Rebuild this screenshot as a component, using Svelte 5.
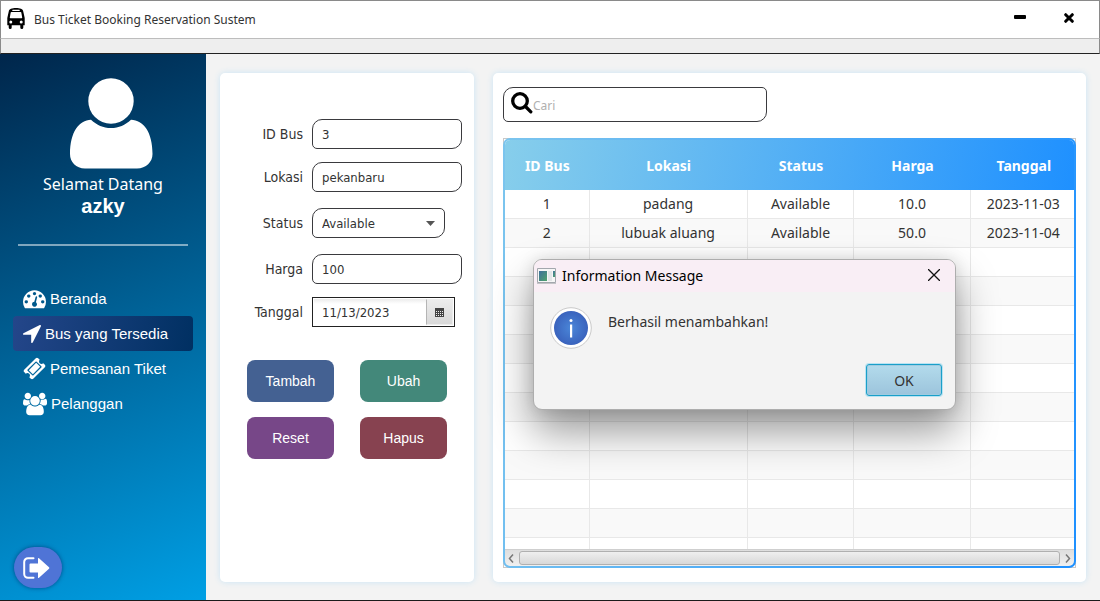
<script>
  let idBus = $state('3');
  let lokasi = $state('pekanbaru');
  let status = $state('Available');
  let harga = $state('100');
  let tanggal = $state('11/13/2023');
  let cari = $state('');
  let dialogOpen = $state(true);

  const columns = ['ID Bus', 'Lokasi', 'Status', 'Harga', 'Tanggal'];
  const buses = [
    ['1', 'padang', 'Available', '10.0', '2023-11-03'],
    ['2', 'lubuak aluang', 'Available', '50.0', '2023-11-04']
  ];
  const emptyRows = Array.from({ length: 11 });
</script>

<div class="window">
  <header class="titlebar">
    <svg class="bus" viewBox="0 0 18 21" aria-hidden="true">
      <path fill-rule="evenodd" d="M1.8 3.2C2 1.2 5 0 9 0s7 1.2 7.2 3.2L17.7 10v7.2h-1.4v2.2a1.4 1.4 0 0 1-3 0v-2.2H4.700v2.2a1.400 1.400 0 0 1-3 0v-2.200H.3V10zM5.800 1.700a.5.5 0 0 0 0 1.300h6.400a.5.5 0 0 0 0-1.300zM3.700 4.500 2.800 9.600q0 .6.600.6h11.200q.6 0 .6-.6l-.9-5.100q-.1-.5-.6-.5H4.300q-.5 0-.6.500zM3.800 12.500a1.500 1.500 0 1 0 0 3 1.500 1.500 0 0 0 0-3zm10.400 0a1.500 1.500 0 1 0 0 3 1.500 1.500 0 0 0 0-3z" />
    </svg>
    <h1>Bus Ticket Booking Reservation Sustem</h1>
    <div class="controls">
      <button type="button" aria-label="Minimize">
        <svg viewBox="0 0 12 12"><rect x="0" y="2" width="12" height="4" rx="1" /></svg>
      </button>
      <button type="button" aria-label="Close">
        <svg viewBox="0 0 12 12"><path d="M2.700 1.700l6.600 6.600M9.300 1.700L2.700 8.300" stroke="#000" stroke-width="3" stroke-linecap="round" /></svg>
      </button>
    </div>
  </header>
  <div class="strip"></div>

  <div class="body">
    <aside>
      <svg class="avatar" viewBox="0 0 84 91" aria-hidden="true">
        <circle cx="42" cy="23" r="22.700" />
        <path d="M22 41.700C10 42 1 54 1 76c0 8 6 14.500 15 14.500h52c9 0 15.500-6.500 15.500-14.500 0-22-9-34-21.500-34.300C56 47 50 50 42 50s-14-3-20-8.300z" />
      </svg>
      <p class="welcome">Selamat Datang</p>
      <p class="user">azky</p>
      <hr />
      <nav>
        <a href="#beranda">
          <svg width="23" height="23" viewBox="0 0 1792 1792"><path d="M384 1152q0-53-37.5-90.5t-90.5-37.5-90.5 37.5-37.5 90.5 37.5 90.5 90.5 37.5 90.5-37.5 37.5-90.5zm192-448q0-53-37.5-90.5t-90.5-37.5-90.5 37.5-37.5 90.5 37.5 90.5 90.5 37.5 90.5-37.5 37.5-90.5zm428 481l101-382q6-26-7.5-48.5t-38.5-29.5-48 6.5-30 39.5l-101 382q-60 5-107 43.5t-63 98.5q-20 77 20 146t117 89 146-20 89-117q16-60-6-117t-72-91zm660-33q0-53-37.5-90.5t-90.5-37.5-90.5 37.5-37.5 90.5 37.5 90.5 90.5 37.5 90.5-37.5 37.5-90.5zm-640-640q0-53-37.5-90.5t-90.5-37.5-90.5 37.5-37.5 90.5 37.5 90.5 90.5 37.5 90.5-37.5 37.5-90.5zm448 192q0-53-37.5-90.5t-90.5-37.5-90.5 37.5-37.5 90.5 37.5 90.5 90.5 37.5 90.5-37.5 37.5-90.5zm320 448q0 261-141 483-19 29-54 29h-1402q-35 0-54-29-141-221-141-483 0-182 71-348t191-286 286-191 348-71 348 71 286 191 191 286 71 348z" /></svg>
          Beranda
        </a>
        <a href="#bus" class="active" aria-current="page">
          <svg width="18" height="18" viewBox="192 256 1408 1408"><path d="M1593 349l-640 1280q-17 35-57 35-5 0-15-2-22-5-35.500-22.500t-13.500-39.500v-576h-576q-22 0-39.500-13.500t-22.500-35.500 4-42 29-30l1280-640q13-7 29-7 27 0 45 19 15 14 18.500 34.500t-6.500 39.500z" /></svg>
          Bus yang Tersedia
        </a>
        <a href="#tiket">
          <svg width="23" height="23" viewBox="0 0 1792 1792"><path d="M1024 452l316 316-572 572-316-316zm-211 979l618-618q19-19 19-45t-19-45l-362-362q-18-18-45-18t-45 18l-618 618q-19 19-19 45t19 45l362 362q18 18 45 18t45-18zm889-637l-907 908q-37 37-90.500 37t-90.500-37l-126-126q56-56 56-136t-56-136-136-56-136 56l-125-126q-37-37-37-90.500t37-90.500l907-906q37-37 90.500-37t90.500 37l125 125q-56 56-56 136t56 136 136 56 136-56l126 125q37 37 37 90.500t-37 90.500z" /></svg>
          Pemesanan Tiket
        </a>
        <a href="#pelanggan">
          <svg width="24" height="24" viewBox="64 0 1920 1792"><path d="M657 896q-162 5-265 128h-134q-82 0-138-40.500t-56-118.500q0-353 124-353 6 0 43.500 21t97.500 42.500 119 21.500q67 0 133-23-5 37-5 66 0 159 91 294zm1071 637q0 120-73 189.500t-194 69.500h-874q-121 0-194-69.500t-73-189.500q0-53 3.500-103.500t14-109 26.500-108.500 43-97.500 62-81 85.500-53.500 111.500-20q10 0 43 21.500t73 48 107 48 135 21.500 135-21.500 107-48 73-48 43-21.500q61 0 111.500 20t85.500 53.500 62 81 43 97.500 26.500 108.500 14 109 3.500 103.500zm-1024-1277q0 106-75 181t-181 75-181-75-75-181 75-181 181-75 181 75 75 181zm704 384q0 159-112.500 271.500t-271.500 112.500-271.500-112.500-112.500-271.500 112.500-271.500 271.500-112.500 271.500 112.500 112.500 271.500zm576 225q0 78-56 118.500t-138 40.500h-134q-103-123-265-128 91-135 91-294 0-29-5-66 66 23 133 23 59 0 119-21.500t97.500-42.500 43.500-21q124 0 124 353zm-128-609q0 106-75 181t-181 75-181-75-75-181 75-181 181-75 181 75 75 181z" /></svg>
          Pelanggan
        </a>
      </nav>
      <button type="button" class="logout" aria-label="Logout">
        <svg width="28" height="22" viewBox="0 0 28 22">
          <path d="M10.500 1.200H5A3.800 3.800 0 0 0 1.200 5v12A3.800 3.800 0 0 0 5 20.800h5.500" fill="none" stroke="#fff" stroke-width="2" stroke-linecap="round" />
          <path d="M6.500 7.500q0-1 1-1h7.500V1.600q0-1.200 1-.4l10 9q.8.800 0 1.600l-10 9q-1 .8-1-.4v-4.900H7.500q-1 0-1-1z" />
        </svg>
      </button>
    </aside>

    <main>
      <section class="panel form-panel">
        <form onsubmit={(e) => e.preventDefault()}>
          <div class="field"><label for="id">ID Bus</label><input id="id" class="box" bind:value={idBus} /></div>
          <div class="field"><label for="lokasi">Lokasi</label><input id="lokasi" class="box" bind:value={lokasi} /></div>
          <div class="field choice">
            <label for="status">Status</label>
            <div class="select">
              <select id="status" class="box" bind:value={status}>
                <option>Available</option>
                <option>Not Available</option>
              </select>
              <svg width="9" height="5" viewBox="0 0 9 5" aria-hidden="true"><path d="M0 0h9L4.500 5z" fill="#555" /></svg>
            </div>
          </div>
          <div class="field"><label for="harga">Harga</label><input id="harga" class="box" bind:value={harga} /></div>
          <div class="field">
            <label for="tanggal">Tanggal</label>
            <div class="date">
              <input id="tanggal" bind:value={tanggal} />
              <button type="button" aria-label="Pilih tanggal">
                <svg width="9" height="9" viewBox="0 0 9 9" shape-rendering="crispEdges">
                  <path d="M0 0h9v9H0z" fill="#444" />
                  <path d="M1 3h1v1H1zm2 0h1v1H3zm2 0h1v1H5zm2 0h1v1H7zM1 5h1v1H1zm2 0h1v1H3zm2 0h1v1H5zm2 0h1v1H7zM1 7h1v1H1zm2 0h1v1H3zm2 0h1v1H5zm2 0h1v1H7z" fill="#eee" />
                </svg>
              </button>
            </div>
          </div>
          <div class="actions">
            <button type="button" class="add">Tambah</button>
            <button type="button" class="edit">Ubah</button>
            <button type="button" class="reset">Reset</button>
            <button type="button" class="delete">Hapus</button>
          </div>
        </form>
      </section>

      <section class="panel list-panel">
        <label class="search box">
          <svg width="22" height="22" viewBox="0 0 22 22" aria-hidden="true">
            <circle cx="9" cy="9" r="7.300" fill="none" stroke="#000" stroke-width="3.300" />
            <path d="M14.500 14.500l5.300 5.300" stroke="#000" stroke-width="3.300" stroke-linecap="round" />
          </svg>
          <input aria-label="Cari" placeholder="Cari" bind:value={cari} />
        </label>

        <div class="frame">
          <div class="grid">
            <div class="rows">
              <table>
                <colgroup><col class="c1" /><col class="c2" /><col class="c3" /><col class="c4" /><col /></colgroup>
                <thead>
                  <tr>{#each columns as c}<th>{c}</th>{/each}</tr>
                </thead>
                <tbody>
                  {#each buses as bus}
                    <tr>{#each bus as cell}<td>{cell}</td>{/each}</tr>
                  {/each}
                  {#each emptyRows as _}
                    <tr>{#each columns as _c}<td></td>{/each}</tr>
                  {/each}
                </tbody>
              </table>
            </div>
            <div class="scroll">
              <svg width="6" height="9" viewBox="0 0 6 9"><path d="M5 .5L1.500 4.500 5 8.500" /></svg>
              <div class="thumb"></div>
              <svg width="6" height="9" viewBox="0 0 6 9"><path d="M1 .5l3.500 4L1 8.500" /></svg>
            </div>
          </div>
        </div>
      </section>
    </main>
  </div>

  {#if dialogOpen}
    <div class="dialog" role="dialog" aria-labelledby="dialog-title">
      <div class="dialog-bar">
        <svg width="19" height="16" viewBox="0 0 19 16" aria-hidden="true">
          <defs>
            <linearGradient id="pane-fill" x1="0" y1="0" x2="1" y2="1"><stop offset="0" stop-color="#3f6f9c" /><stop offset="1" stop-color="#4fa36c" /></linearGradient>
          </defs>
          <path d="M.5.5h18v14H.5z" fill="#f6f6f6" stroke="#a3a7ad" />
          <path d="M0 15h19v1H0z" fill="#c4c4c8" />
          <path d="M2 3h8v10H2z" fill="url(#pane-fill)" />
          <path d="M11 3h4v10h-4z" fill="#e3e6e8" />
          <path d="M16 3h2v6h-2z" fill="url(#pane-fill)" />
        </svg>
        <h2 id="dialog-title">Information Message</h2>
        <button type="button" class="close" aria-label="Tutup" onclick={() => (dialogOpen = false)}>
          <svg width="12" height="12" viewBox="0 0 12 12"><path d="M0 0l12 12M12 0L0 12" stroke="#111" stroke-width="1.300" /></svg>
        </button>
      </div>
      <div class="dialog-body">
        <svg width="42" height="42" viewBox="0 0 42 42" aria-hidden="true">
          <defs>
            <radialGradient id="info-fill"><stop offset="0" stop-color="#4a86d8" /><stop offset="1" stop-color="#3a63bd" /></radialGradient>
          </defs>
          <circle cx="21" cy="21" r="20.300" fill="#fff" stroke="#c9c9c9" />
          <circle cx="21" cy="21" r="17" fill="url(#info-fill)" />
          <circle cx="21" cy="13.500" r="1.500" fill="#fff" />
          <path d="M20 17.500h2.200v13H20z" fill="#fff" />
        </svg>
        <p>Berhasil menambahkan!</p>
      </div>
      <div class="dialog-foot">
        <button type="button" onclick={() => (dialogOpen = false)}>OK</button>
      </div>
    </div>
  {/if}
</div>

<style>
  :global(body) {
    margin: 0;
    background: #f3f3f3;
  }
  * {
    box-sizing: border-box;
  }
  .window {
    position: relative;
    display: flex;
    flex-direction: column;
    min-height: 100vh;
    border-bottom: 1px solid #1b1b1b;
    font-family: 'Noto Sans', 'Open Sans', sans-serif;
    color: #333;
  }
  button,
  input,
  select {
    font: inherit;
    color: inherit;
    margin: 0;
  }
  h1,
  h2,
  p {
    margin: 0;
    font-weight: 400;
  }
  svg {
    display: block;
    flex: none;
  }
  .titlebar {
    display: flex;
    align-items: center;
    height: 39px;
    padding: 0 24px 2px 6px;
    background: #fff;
    border: 1px solid #8a8a8a;
    border-bottom-color: #bdbdbd;
  }
  .bus {
    width: 18px;
    height: 21px;
  }
  h1 {
    margin-left: 9px;
    padding-top: 2px;
    font-size: 12px;
    line-height: 18px;
  }
  .controls {
    display: flex;
    gap: 37px;
    margin-left: auto;
  }
  .controls button {
    padding: 0;
    border: 0;
    background: none;
  }
  .controls svg {
    width: 12px;
    height: 12px;
  }
  .strip {
    height: 15px;
    background: #eee;
    border: 1px solid #8a8a8a;
    border-top: 0;
    border-bottom-color: #222;
  }
  .body {
    flex: 1;
    display: flex;
  }
  aside {
    flex: none;
    display: flex;
    flex-direction: column;
    width: 206px;
    padding: 24px 13px 12px;
    background: linear-gradient(159deg, #00264b, #009fe4);
    color: #fff;
    fill: #fff;
    font-family: 'Liberation Sans', Arial, sans-serif;
  }
  .avatar {
    width: 84px;
    height: 91px;
    margin-left: 56px;
  }
  .welcome {
    margin-top: 4px;
    font-family: 'Noto Sans', sans-serif;
    font-size: 16px;
    line-height: 22px;
    text-align: center;
  }
  .user {
    font-size: 20px;
    font-weight: 700;
    line-height: 22px;
    text-align: center;
  }
  hr {
    width: 170px;
    height: 2px;
    margin: 27px auto 35px 5px;
    border: 0;
    background: rgba(255, 255, 255, 0.5);
  }
  nav a {
    display: flex;
    align-items: center;
    gap: 4px;
    height: 35px;
    padding-left: 10px;
    border-radius: 4px;
    color: #fff;
    font-size: 15px;
    text-decoration: none;
  }
  nav .active {
    background: linear-gradient(100deg, #24468a, #003062);
  }
  .logout {
    display: grid;
    place-items: center;
    width: 48px;
    height: 41px;
    margin-top: auto;
    margin-left: 1px;
    padding: 0 2px 0 0;
    border: 0;
    border-radius: 21px;
    background: #4f74d6;
    fill: #fff;
    box-shadow: 0 0 4px rgba(0, 30, 90, 0.6);
  }
  main {
    flex: 1;
    display: flex;
    gap: 19px;
    min-width: 0;
    padding: 19px 14px 18px;
    background: #f3f3f3;
  }
  .panel {
    background: #fff;
    border-radius: 5px;
    box-shadow: 0 0 6px #c9e4f5;
  }
  .form-panel {
    flex: none;
    width: 254px;
    padding: 46px 12px 0;
  }
  form {
    display: flex;
    flex-direction: column;
    gap: 13px;
  }
  .field {
    display: grid;
    grid-template-columns: 71px 1fr;
    gap: 9px;
    align-items: center;
    font-family: 'DejaVu Sans Condensed', 'DejaVu Sans', sans-serif;
  }
  .choice {
    height: 36px;
  }
  .field label {
    font-size: 14px;
    text-align: right;
  }
  .box {
    background: #fff;
    border: 1px solid #3a3a3e;
    border-radius: 10px 5px;
  }
  .field .box {
    width: 100%;
    height: 30px;
    padding: 0 9px;
    font-size: 13px;
  }
  .select {
    display: grid;
    width: 133px;
    align-items: center;
  }
  .select > :global(*) {
    grid-area: 1 / 1;
  }
  select {
    appearance: none;
  }
  .select svg {
    justify-self: end;
    margin-right: 10px;
    pointer-events: none;
  }
  .date {
    display: flex;
    width: 143px;
    height: 30px;
    padding: 1px;
    border: 1px solid #222;
    background: #fff;
  }
  .date input {
    flex: 1;
    min-width: 0;
    padding: 0 8px;
    border: 0;
    background: linear-gradient(#ececec, #fff 5px);
    font-size: 13px;
  }
  .date button {
    display: grid;
    place-items: center;
    width: 27px;
    padding: 0;
    border: 1px solid #ececec;
    border-left-color: #b5b5b5;
    background: linear-gradient(#ececec, #d9d9d9);
  }
  .actions {
    display: grid;
    grid-template-columns: 87px 87px;
    gap: 15px 26px;
    margin: 20px 0 0 15px;
  }
  .actions button {
    height: 42px;
    padding: 0;
    border: 0;
    border-radius: 8px;
    color: #fff;
    font-family: 'Liberation Sans', Arial, sans-serif;
    font-size: 14px;
  }
  .add {
    background: #446192;
  }
  .edit {
    background: #43887a;
  }
  .reset {
    background: #774788;
  }
  .delete {
    background: #874250;
  }
  .list-panel {
    flex: 1;
    display: flex;
    flex-direction: column;
    gap: 16px;
    min-width: 0;
    padding: 14px 10px;
  }
  .search {
    display: flex;
    align-items: center;
    width: 264px;
    height: 35px;
    padding-left: 7px;
  }
  .search svg {
    margin-bottom: 4px;
  }
  .search input {
    flex: 1;
    min-width: 0;
    padding: 2px 0 0;
    border: 0;
    outline: 0;
    background: none;
    font-size: 12px;
  }
  .search input::placeholder {
    color: #b0b0b0;
  }
  .frame {
    flex: 1;
    display: flex;
    min-height: 0;
    background: #fff;
    box-shadow: inset 0 0 0 1px #c8c8c8;
  }
  .grid {
    flex: 1;
    display: flex;
    flex-direction: column;
    min-width: 0;
    padding: 2px;
    border-radius: 7px;
    background: linear-gradient(100deg, #7cc5ee, #1e90ff);
  }
  .rows {
    flex: 1 1 0;
    min-height: 0;
    overflow: hidden;
    border-radius: 5px 5px 0 0;
    background: #fff;
  }
  table {
    width: calc(100% + 3px);
    table-layout: fixed;
    border-collapse: separate;
    border-spacing: 0;
    font-size: 14px;
    text-align: center;
  }
  .c1 {
    width: 14.800%;
  }
  .c2 {
    width: 27.600%;
  }
  .c3 {
    width: 18.700%;
  }
  .c4 {
    width: 20.300%;
  }
  thead {
    background: linear-gradient(100deg, #87ceeb, #1e90ff);
  }
  th {
    height: 50px;
    padding: 0;
    color: #fff;
    font-weight: 700;
  }
  td {
    height: 29px;
    padding: 0;
    border-right: 1px solid #e8e8e8;
    border-bottom: 1px solid #e8e8e8;
    line-height: 20px;
  }
  tbody tr:nth-child(even) {
    background: #f9f9f9;
  }
  .scroll {
    display: flex;
    align-items: center;
    gap: 5px;
    height: 17px;
    padding: 0 3px;
    border-top: 1px solid #cfcfcf;
    border-radius: 0 0 5px 5px;
    background: linear-gradient(#dedede, #f0f0f0);
  }
  .scroll path {
    fill: none;
    stroke: #777;
    stroke-width: 1.500;
  }
  .thumb {
    flex: 1;
    height: 14px;
    border: 1px solid #b0b0b0;
    border-radius: 3px;
    background: linear-gradient(#efefef, #d8d8d8);
  }
  .dialog {
    position: absolute;
    top: 259px;
    left: 533px;
    width: 423px;
    overflow: hidden;
    border: 1px solid #adadad;
    border-radius: 9px;
    background: #f3f3f3;
    box-shadow:
      0 22px 42px rgba(0, 0, 0, 0.4),
      0 0 16px rgba(0, 0, 0, 0.12);
  }
  .dialog-bar {
    display: flex;
    align-items: center;
    gap: 6px;
    height: 32px;
    padding: 0 15px 0 3px;
    background: #f9eef5;
    color: #000;
  }
  h2 {
    font-size: 14px;
    line-height: 20px;
  }
  .close {
    margin-left: auto;
    padding: 0 0 2px;
    border: 0;
    background: none;
  }
  .dialog-body {
    display: flex;
    gap: 16px;
    padding: 15px 16px 0;
  }
  .dialog-body p {
    padding-top: 5px;
    font-size: 14px;
    line-height: 20px;
  }
  .dialog-foot {
    display: flex;
    justify-content: flex-end;
    padding: 15px 13px 13px;
  }
  .dialog-foot button {
    width: 76px;
    height: 32px;
    padding: 0;
    border: 1px solid #1a9fc9;
    border-radius: 3px;
    background: linear-gradient(#b3dbec, #9cc4dc);
    box-shadow:
      0 0 0 1px #b9e3f2,
      inset 0 0 0 1px #9fcbe0;
    font-size: 14px;
  }
</style>
